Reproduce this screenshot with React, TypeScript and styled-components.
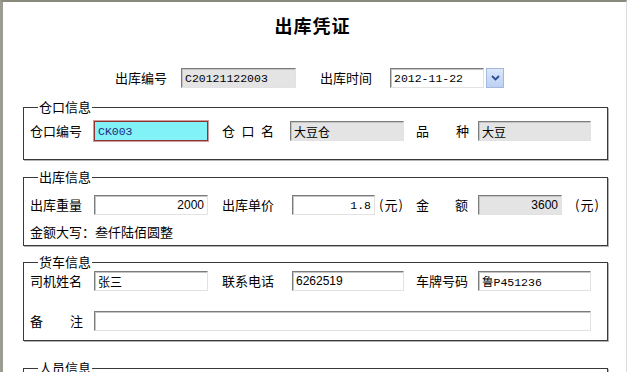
import styled, { createGlobalStyle } from "styled-components";

const GlobalStyle = createGlobalStyle`
  html, body {
    margin: 0;
    padding: 0;
    background: #fff;
  }
  body {
    font-family: "Noto Sans CJK SC", "Liberation Sans", sans-serif;
    font-size: 13px;
    color: #000;
  }
`;

const Page = styled.div`
  width: 627px;
  height: 372px;
  overflow: hidden;
  box-sizing: border-box;
  border-top: 2px solid #8a8a7c;
  border-left: 3px solid #9c9c92;
  border-right: 1px solid #dcdcdc;
`;

const Title = styled.h1`
  margin: 0;
  padding-top: 11px;
  padding-right: 4px;
  text-align: center;
  font-size: 18px;
  font-weight: bold;
  line-height: 24px;
  letter-spacing: 1px;
`;

const MetaRow = styled.div`
  display: flex;
  align-items: center;
  height: 20px;
  margin-top: 31px;
  padding-left: 112px;
`;

const Row = styled.div<{ $mt?: number }>`
  display: flex;
  align-items: center;
  height: 20px;
  margin-top: ${(p) => p.$mt ?? 0}px;
`;

const Label = styled.span<{ $w?: number; $pad?: number; $ml?: number; $spread?: boolean }>`
  display: ${(p) => (p.$spread ? "flex" : "block")};
  justify-content: space-between;
  flex-shrink: 0;
  box-sizing: border-box;
  width: ${(p) => (p.$w ? `${p.$w}px` : "auto")};
  padding-right: ${(p) => p.$pad ?? 0}px;
  margin-left: ${(p) => p.$ml ?? 0}px;
  font-size: 13px;
  line-height: 20px;
  white-space: nowrap;
`;

const Unit = styled.span<{ $ml: number; $w: number }>`
  flex-shrink: 0;
  width: ${(p) => p.$w}px;
  margin-left: ${(p) => p.$ml}px;
  font-size: 13px;
  line-height: 20px;
  letter-spacing: 1px;
  white-space: nowrap;
`;

type Tone = "gray" | "white" | "active";

const Field = styled.input<{ $w: number; $tone?: Tone; $right?: boolean; $mono?: boolean }>`
  box-sizing: border-box;
  flex-shrink: 0;
  width: ${(p) => p.$w}px;
  height: 20px;
  margin: 0;
  padding: 0 3px;
  outline: none;
  font-family: ${(p) =>
    p.$mono
      ? `"Liberation Mono", "Noto Sans CJK SC", monospace`
      : `"Liberation Sans", "Noto Sans CJK SC", sans-serif`};
  font-size: ${(p) => (p.$mono ? "11.5px" : "12px")};
  text-align: ${(p) => (p.$right ? "right" : "left")};
  color: ${(p) => (p.$tone === "active" ? "#1c2c7c" : "#000")};
  background: ${(p) =>
    p.$tone === "gray" ? "#e4e4e4" : p.$tone === "active" ? "#80f2f8" : "#fff"};
  border: 1px solid;
  border-color: ${(p) =>
    p.$tone === "active" ? "#8c3434" : "#7c7c7c #e2e2e2 #e2e2e2 #7c7c7c"};
  box-shadow: ${(p) =>
    p.$tone === "active" ? "0 0 0 1px #d49a9a" : "inset 1px 1px 0 #c4c4c4"};
`;

const DropButton = styled.span`
  display: flex;
  align-items: center;
  justify-content: center;
  box-sizing: border-box;
  width: 18px;
  height: 20px;
  margin-left: 2px;
  background: linear-gradient(#dbe7fb, #bcd0f2);
  border: 1px solid #a4b8de;
`;

const Group = styled.fieldset<{ $top: number; $pb: number }>`
  box-sizing: border-box;
  width: 585px;
  min-inline-size: 0;
  margin: ${(p) => p.$top}px 0 0 20px;
  padding: 0 0 ${(p) => p.$pb}px 6px;
  border: 1px solid #3a3a3a;
  box-shadow: 1px 1px 0 #b4b4b4;
`;

const Legend = styled.legend`
  margin-left: 8px;
  padding: 0 1px;
  font-size: 13px;
  line-height: 14px;
`;

const Spread = ({ text }: { text: string }) => (
  <>
    {text.split("").map((c, i) => (
      <span key={i}>{c}</span>
    ))}
  </>
);

const Chevron = () => (
  <svg width="9" height="6" viewBox="0 0 9 6">
    <path d="M1 1 L4.5 4.5 L8 1" fill="none" stroke="#2c4c9c" strokeWidth="1.8" />
  </svg>
);

const App = () => {
  return (
    <>
      <GlobalStyle />
      <Page>
        <Title>出库凭证</Title>

        <MetaRow>
          <Label $w={66}>出库编号</Label>
          <Field $w={115} $tone="gray" $mono readOnly value="C20121122003" />
          <Label $w={70} $ml={24}>出库时间</Label>
          <Field $w={94} $mono readOnly value="2012-11-22" />
          <DropButton>
            <Chevron />
          </DropButton>
        </MetaRow>

        <Group $top={12} $pb={18}>
          <Legend>仓口信息</Legend>
          <Row $mt={7}>
            <Label $w={64}>仓口编号</Label>
            <Field $w={114} $tone="active" $mono readOnly value="CK003" />
            <Label $w={68} $pad={16} $ml={14} $spread>
              <Spread text="仓口名" />
            </Label>
            <Field $w={114} $tone="gray" readOnly value="大豆仓" />
            <Label $w={62} $pad={9} $ml={12} $spread>
              <Spread text="品种" />
            </Label>
            <Field $w={113} $tone="gray" readOnly value="大豆" />
          </Row>
        </Group>

        <Group $top={10} $pb={3}>
          <Legend>出库信息</Legend>
          <Row $mt={11}>
            <Label $w={64}>出库重量</Label>
            <Field $w={114} $right readOnly value="2000" />
            <Label $w={70} $ml={14}>出库单价</Label>
            <Field $w={83} $right $mono readOnly value="1.8" />
            <Unit $ml={4} $w={37}>(元)</Unit>
            <Label $w={62} $pad={10} $spread>
              <Spread text="金额" />
            </Label>
            <Field $w={84} $tone="gray" $right readOnly value="3600" />
            <Unit $ml={13} $w={30}>(元)</Unit>
          </Row>
          <Row $mt={7}>
            <Label>金额大写：叁仟陆佰圆整</Label>
          </Row>
        </Group>

        <Group $top={9} $pb={9}>
          <Legend>货车信息</Legend>
          <Row $mt={2}>
            <Label $w={64}>司机姓名</Label>
            <Field $w={114} readOnly value="张三" />
            <Label $w={70} $ml={14}>联系电话</Label>
            <Field $w={112} readOnly value="6262519" />
            <Label $w={62} $ml={12}>车牌号码</Label>
            <Field $w={113} $mono readOnly value="鲁P451236" />
          </Row>
          <Row $mt={20}>
            <Label $w={64} $pad={11} $spread>
              <Spread text="备注" />
            </Label>
            <Field $w={497} readOnly value="" />
          </Row>
        </Group>

        <Group $top={20} $pb={40}>
          <Legend>人员信息</Legend>
          <Row $mt={10} />
        </Group>
      </Page>
    </>
  );
};

export default App;
